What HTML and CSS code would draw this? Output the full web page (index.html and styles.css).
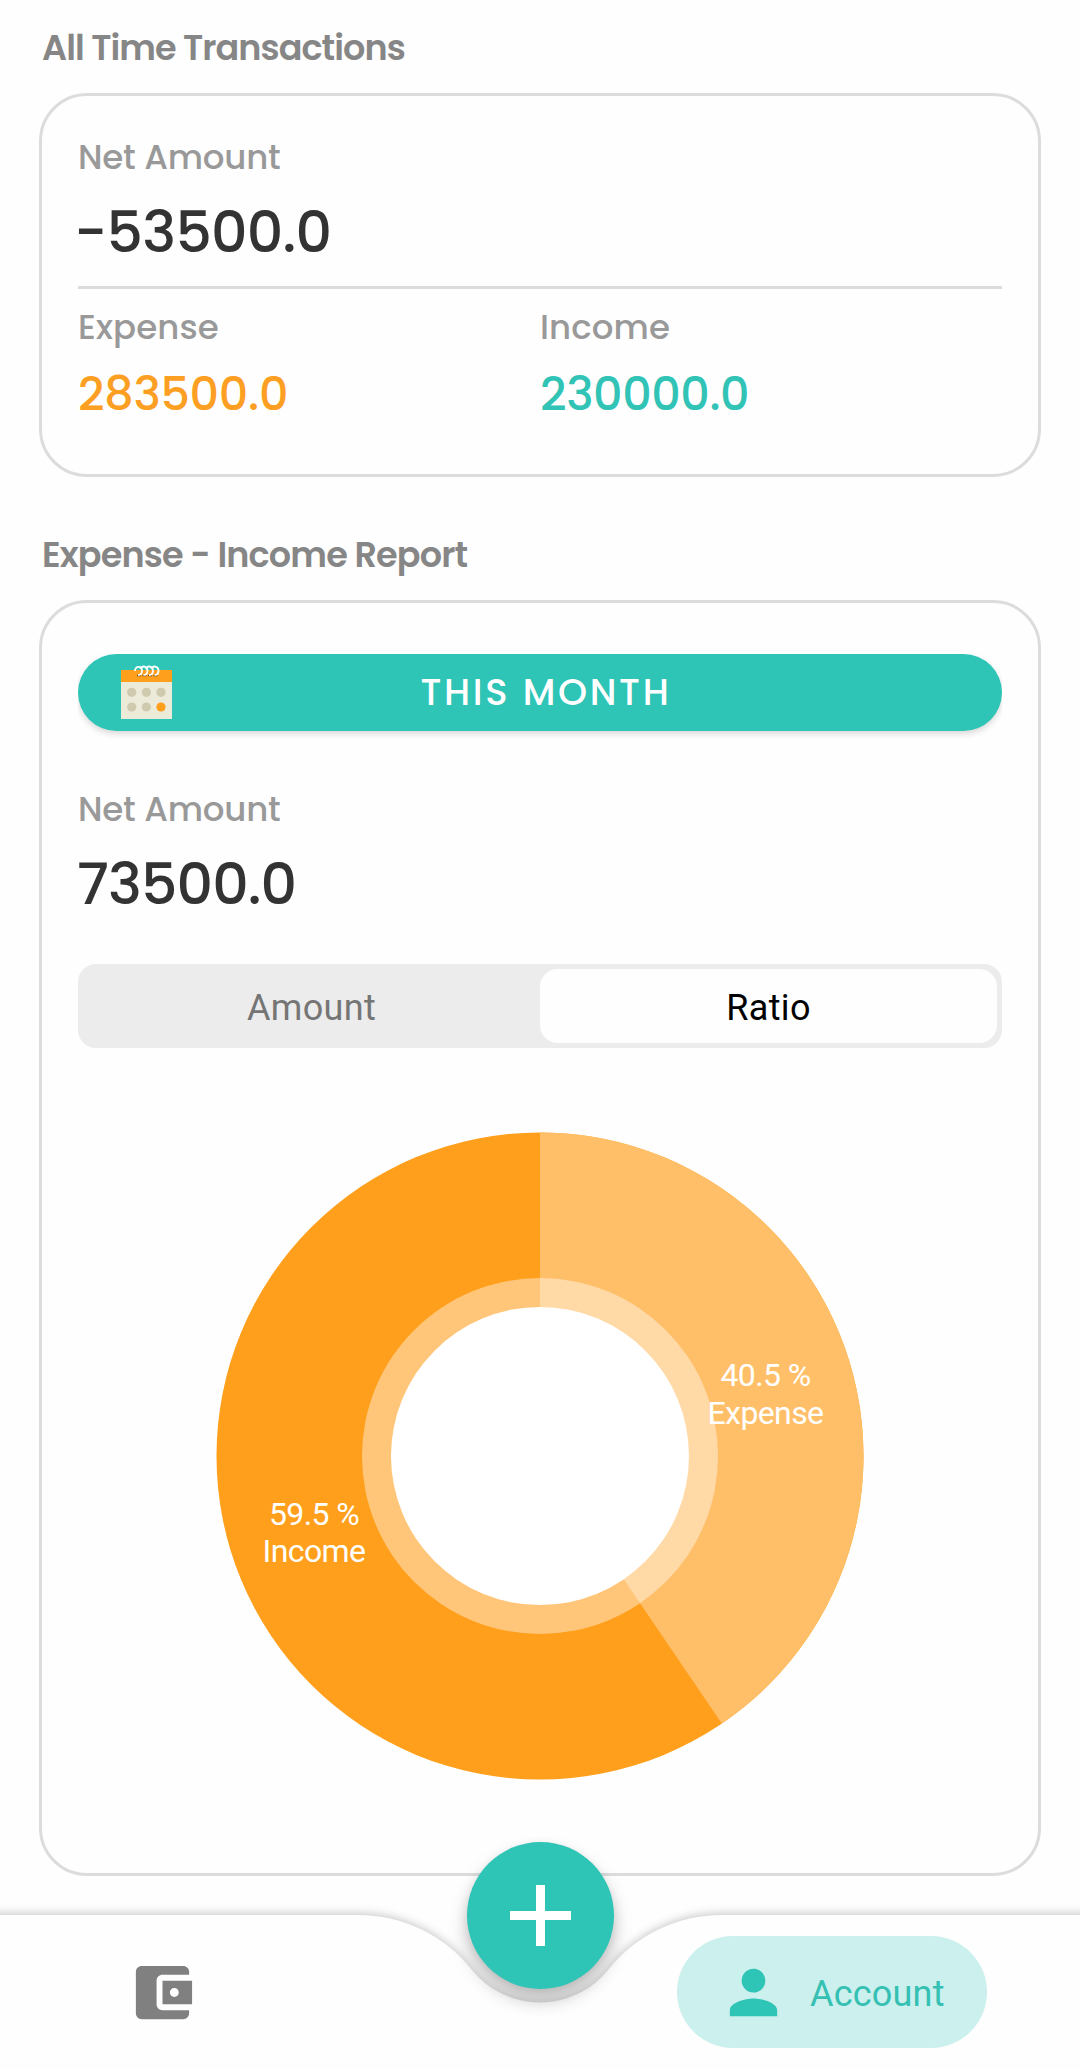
FILE: index.html
```html
<!DOCTYPE html>
<html lang="en">
<head>
<meta charset="utf-8">
<title>Account</title>
<link rel="stylesheet" href="styles.css">
</head>
<body>
<main class="page">
  <h2 class="heading">All Time Transactions</h2>
  <section class="card card-totals">
    <div class="label label-net">Net Amount</div>
    <div class="net net-negative">-53500.0</div>
    <hr class="divider">
    <div class="split">
      <div class="split-col">
        <div class="label">Expense</div>
        <div class="sum sum-expense">283500.0</div>
      </div>
      <div class="split-col">
        <div class="label">Income</div>
        <div class="sum sum-income">230000.0</div>
      </div>
    </div>
  </section>

  <h2 class="heading heading-report">Expense - Income Report</h2>
  <section class="card card-report">
    <div class="period-wrap">
      <button class="period">
        <svg class="period-icon" viewBox="0 0 51 55">
          <path d="M0 16h51v38H0z" fill="#ecead9"/>
          <path d="M0 5h51v12H0z" fill="#ff9f1c"/>
          <g fill="#cfc9ae">
            <circle cx="10.700" cy="27.300" r="4.600"/><circle cx="25.400" cy="27.300" r="4.600"/><circle cx="40" cy="27.300" r="4.600"/>
            <circle cx="10.700" cy="42" r="4.600"/><circle cx="25.400" cy="42" r="4.600"/>
          </g>
          <circle cx="40" cy="42" r="4.600" fill="#ff9f1c"/>
          <path d="M16 10.500h4M21.500 10.500h4M27 10.500h4M32.500 10.500h4" fill="none" stroke="#5d4a26" stroke-width="1.600"/>
          <g fill="none" stroke="#fff" stroke-width="1.800">
            <path d="M14 6c0-5.500 7-5.500 7 0 0 2.500-1.500 4-4 4"/>
            <path d="M19.500 4c1.500-4 7-3 7 2 0 2.500-1.500 4-4 4"/>
            <path d="M25 4c1.500-4 7-3 7 2 0 2.500-1.500 4-4 4"/>
            <path d="M30.500 4c1.500-4 7-3 7 2 0 2.500-1.500 4-4 4"/>
          </g>
        </svg>
        <span class="period-text">THIS MONTH</span>
      </button>
    </div>
    <div class="label label-net">Net Amount</div>
    <div class="net">73500.0</div>
    <div class="tabs">
      <div class="tab">Amount</div>
      <div class="tab tab-active">Ratio</div>
    </div>
    <svg class="chart" viewBox="-324 -324 648 648">
      <circle r="323.500" fill="#ff9f1c"/>
      <path d="M0 0V-323.500A323.500 323.500 0 0 1 181.800 267.600Z" fill="#ffbf69"/>
      <circle r="178" fill="#fff" fill-opacity=".41"/>
      <circle r="149" fill="#fff"/>
      <g class="chart-text">
        <text x="225.500" y="-70">40.5 %</text>
        <text x="225.500" y="-32">Expense</text>
        <text x="-226" y="69">59.5 %</text>
        <text x="-226" y="106">Income</text>
      </g>
    </svg>
  </section>
</main>

<nav class="navbar">
  <svg class="navbar-shape" viewBox="0 0 1080 154">
    <path d="M-40 0H358A145.500 145.500 0 0 1 471.600 54.600A87.500 87.500 0 0 0 608.400 54.600A145.500 145.500 0 0 1 722 0H1120V200H-40Z"/>
  </svg>
  <div class="navbar-item">
    <svg class="icon icon-wallet" viewBox="0 0 24 24"><path d="M21 18v1c0 1.100-.9 2-2 2H5c-1.110 0-2-.9-2-2V5c0-1.100.89-2 2-2h14c1.100 0 2 .9 2 2v1h-9c-1.110 0-2 .9-2 2v8c0 1.100.89 2 2 2h9zm-9-2h10V8H12v8zm4-2.500c-.83 0-1.500-.67-1.500-1.500s.67-1.500 1.500-1.500 1.500.67 1.500 1.500-.67 1.500-1.500 1.500z"/></svg>
  </div>
  <div class="navbar-active">
    <svg class="icon icon-person" viewBox="0 0 24 24"><path d="M12 12c2.210 0 4-1.790 4-4s-1.790-4-4-4-4 1.790-4 4 1.790 4 4 4zm0 2c-2.670 0-8 1.340-8 4v2h16v-2c0-2.660-5.330-4-8-4z"/></svg>
    <span class="navbar-text">Account</span>
  </div>
  <button class="fab">
    <svg class="fab-icon" viewBox="0 0 61 61"><path d="M26 0h9v26h26v9H35v26h-9V35H0v-9h26z"/></svg>
  </button>
</nav>
</body>
</html>
```
FILE: styles.css
```css
* { box-sizing: border-box; }
body { margin: 0; background: #fefefe; font-family: Poppins, Inter, "Open Sans", sans-serif; }
button { border: 0; font: inherit; }
.page { height: 1915px; padding: 24px 39px 0; }
.heading { margin: 0 0 21px 3px; font-size: 35px; line-height: 48px; font-weight: 600; letter-spacing: -.93px; color: #868686; }
.heading-report { margin-top: 54px; letter-spacing: -.83px; }
.card { border: 3px solid #dcdcdc; border-radius: 48px; padding: 0 36px; }
.card-totals { height: 384px; padding-top: 39px; }
.card-report { height: 1276px; padding-top: 51px; }
.label { font-size: 34px; line-height: 44px; font-weight: 500; letter-spacing: .1px; color: #999; }
.label-net { letter-spacing: -.2px; }
.net { margin: 19px 0 0 -1px; font-size: 57px; line-height: 68px; font-weight: 500; letter-spacing: -.9px; color: #333; }
.net-negative { margin-left: -4px; letter-spacing: -.75px; }
.divider { margin: 20px 0 16px; height: 3px; border: 0; background: #dcdcdc; }
.split { display: grid; grid-template-columns: 1fr 1fr; }
.sum { margin-top: 17px; font-size: 46px; line-height: 56px; font-weight: 500; letter-spacing: -.25px; }
.sum-expense { color: #fc9f22; }
.sum-income { letter-spacing: -.4px; color: #31c3b5; }
.period-wrap { height: 133px; overflow: hidden; }
.period { display: grid; grid-template-columns: 51px 1fr 51px; align-items: center; width: 100%; height: 77px; padding: 0 43px; border-radius: 39px; background: #2ec4b6; box-shadow: 0 3px 6px rgba(0,0,0,.15); }
.period-icon { width: 51px; height: 55px; }
.period-text { padding: 0 0 2px 12px; color: #fff; font-size: 37px; font-weight: 500; line-height: 44px; letter-spacing: 2.7px; text-align: center; }
.tabs { display: grid; grid-template-columns: 1fr 1fr; margin-top: 46px; height: 84px; padding: 5px; border-radius: 18px; background: #ececec; font: 36px/78px Roboto, sans-serif; letter-spacing: .35px; text-align: center; color: #757575; }
.tab { height: 74px; }
.tab-active { border-radius: 18px; background: #fefefe; color: #000; }
.chart { display: block; width: 648px; height: 648px; margin: 84px auto 0; }
.chart-text { font: 32px Roboto, sans-serif; letter-spacing: -.6px; fill: #fff; text-anchor: middle; }
.navbar { position: relative; height: 154px; display: flex; align-items: flex-start; }
.navbar-shape { position: absolute; inset: 0; width: 1080px; height: 154px; overflow: visible; fill: #fefefe; filter: drop-shadow(0 -2px 4px rgba(0,0,0,.2)); }
.navbar-item { position: relative; margin: 41.5px 0 0 126.5px; }
.icon { display: block; width: 71px; height: 71px; }
.icon-wallet { fill: #808080; }
.icon-person { fill: #2ec4b6; }
.navbar-active { position: relative; display: flex; align-items: center; width: 310px; height: 112px; margin: 21px 0 0 479.5px; padding-left: 41px; border-radius: 56px; background: #cbf0ed; }
.navbar-text { padding-top: 3px; margin-left: 21px; font: 36px/44px Roboto, sans-serif; letter-spacing: .2px; color: #35c0b3; }
.fab { position: absolute; left: 467px; top: -73px; display: grid; place-items: center; width: 147px; height: 147px; padding: 0; border-radius: 50%; background: #2ec4b6; box-shadow: 0 11px 18px rgba(0,0,0,.25), 0 2px 8px rgba(0,0,0,.06); }
.fab-icon { width: 61px; height: 61px; fill: #fff; }
```
